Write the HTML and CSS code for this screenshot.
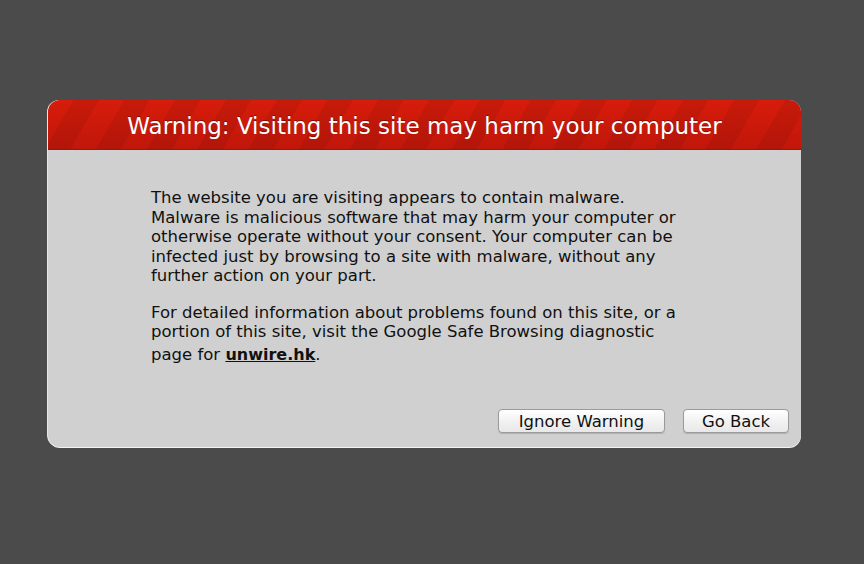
FILE: index.html
```html
<!DOCTYPE html>
<html lang="en">
<head>
    <meta charset="UTF-8">
    <title>Warning: Visiting this site may harm your computer</title>
    <link rel="stylesheet" href="styles.css">
</head>
<body>
    <div class="warning-box">
        <div class="warning-header">
            <h1>Warning: Visiting this site may harm your computer</h1>
        </div>
        <div class="warning-body">
            <p>The website you are visiting appears to contain malware.<br>
            Malware is malicious software that may harm your computer or<br>
            otherwise operate without your consent. Your computer can be<br>
            infected just by browsing to a site with malware, without any<br>
            further action on your part.</p>
            <p>For detailed information about problems found on this site, or a<br>
            portion of this site, visit the Google Safe Browsing diagnostic<br>
            <span class="last-line">page for <a href="#" class="site-link">unwire.hk</a>.</span></p>
            <div class="button-row">
                <button class="mac-button ignore">Ignore Warning</button>
                <button class="mac-button back">Go Back</button>
            </div>
        </div>
    </div>
</body>
</html>
```

FILE: styles.css
```css
html, body {
    margin: 0;
    height: 100%;
}
body {
    background: #4b4b4b;
    font-family: "DejaVu Sans", "Lucida Grande", sans-serif;
    padding-top: 100px;
    box-sizing: border-box;
}
.warning-box {
    width: 753px;
    margin-left: 48px;
    border-radius: 12px;
    background: #d0d0d0;
    box-shadow: 0 1px 0 #f4f4f4, -1px 0 0 #e8e8e8;
    overflow: hidden;
}
.warning-header {
    height: 49px;
    border-bottom: 1px solid #9c1408;
    background:
        repeating-linear-gradient(120deg, rgba(0,0,0,0) 0 22px, rgba(0,0,0,0.07) 22px 44px),
        linear-gradient(#d71c0b, #c0170a);
    display: flex;
    align-items: center;
    justify-content: center;
}
h1 {
    margin: 0;
    font-size: 23px;
    font-weight: normal;
    color: #fff;
    text-shadow: 0 -1px 0 rgba(90, 0, 0, 0.6);
    padding-top: 3px;
}
.warning-body {
    padding: 38px 12px 14px 103px;
}
p {
    margin: 0 0 17px;
    font-size: 16.5px;
    line-height: 19.5px;
    color: #111;
}
.last-line {
    display: inline-block;
    margin-top: 3px;
}
.site-link {
    color: #111;
    font-weight: bold;
    font-size: 16px;
}
.button-row {
    display: flex;
    justify-content: flex-end;
    gap: 18px;
    margin-top: 45px;
}
.mac-button {
    height: 24px;
    padding: 0;
    font-family: inherit;
    font-size: 16.5px;
    color: #111;
    background: linear-gradient(#ffffff, #f2f2f2 50%, #e8e8e8);
    border: 1px solid #9a9a9a;
    border-radius: 4px;
    box-shadow: 0 1px 1px rgba(0,0,0,0.15);
}
.mac-button.ignore {
    width: 167px;
}
.mac-button.back {
    width: 106px;
}
```
